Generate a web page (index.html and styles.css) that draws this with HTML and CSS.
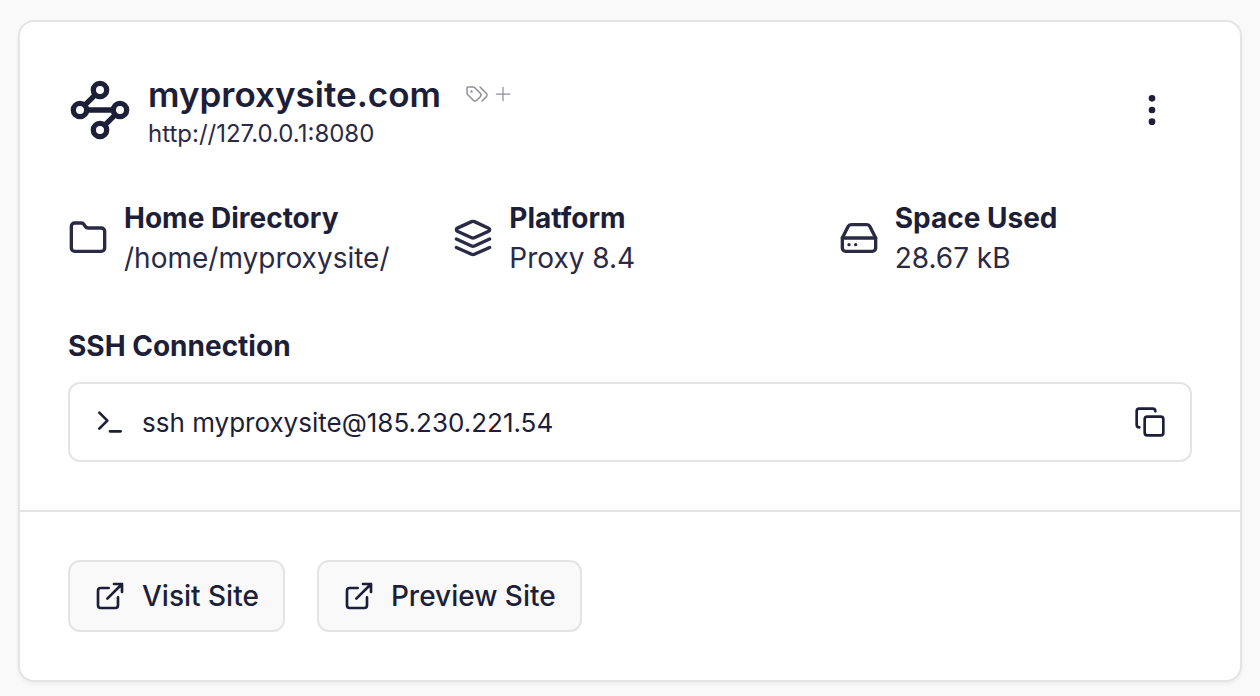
FILE: index.html
```html
<!DOCTYPE html>
<html lang="en">
<head>
  <meta charset="UTF-8">
  <meta name="viewport" content="width=device-width, initial-scale=1">
  <title>myproxysite.com</title>
  <link rel="stylesheet" href="styles.css">
</head>
<body>
  <main class="card">
    <div class="card-body">
      <!-- Site name and menu -->
      <header class="site-header">
        <svg class="icon icon-logo" viewBox="0 0 24 24" aria-hidden="true">
          <circle cx="12" cy="4.5" r="2.5"/>
          <path d="m10.2 6.3-3.9 3.9"/>
          <circle cx="4.5" cy="12" r="2.5"/>
          <path d="M7 12h10"/>
          <circle cx="19.5" cy="12" r="2.5"/>
          <path d="m13.8 17.7 3.9-3.9"/>
          <circle cx="12" cy="19.5" r="2.5"/>
        </svg>
        <div class="site-text">
          <div class="title-row">
            <h1>myproxysite.com</h1>
            <button class="tag-btn" type="button" aria-label="Add tag">
              <svg class="icon icon-tags" viewBox="0 0 24 24" aria-hidden="true">
                <path d="m15 5 6.3 6.3a2.4 2.4 0 0 1 0 3.4L17 19"/>
                <path d="M9.586 5.586A2 2 0 0 0 8.172 5H3a1 1 0 0 0-1 1v5.172a2 2 0 0 0 .586 1.414L8.29 18.29a2.426 2.426 0 0 0 3.42 0l3.58-3.58a2.426 2.426 0 0 0 0-3.42z"/>
                <circle cx="6.5" cy="9.5" r=".5" fill="currentColor"/>
              </svg>
              <svg class="icon icon-plus" viewBox="0 0 24 24" aria-hidden="true">
                <path d="M4 12h16M12 4v16"/>
              </svg>
            </button>
          </div>
          <p class="site-url">http://127.0.0.1:8080</p>
        </div>
        <button class="menu-btn" type="button" aria-label="Site menu">
          <svg class="icon icon-lg" viewBox="0 0 24 24" aria-hidden="true">
            <circle cx="12" cy="5" r="1"/>
            <circle cx="12" cy="12" r="1"/>
            <circle cx="12" cy="19" r="1"/>
          </svg>
        </button>
      </header>

      <!-- Site details -->
      <dl class="details">
        <div class="detail">
          <svg class="icon icon-lg" viewBox="0 0 24 24" aria-hidden="true">
            <path d="M20 20a2 2 0 0 0 2-2V8a2 2 0 0 0-2-2h-7.9a2 2 0 0 1-1.69-.9L9.6 3.9A2 2 0 0 0 7.93 3H4a2 2 0 0 0-2 2v13a2 2 0 0 0 2 2Z"/>
          </svg>
          <div>
            <dt>Home Directory</dt>
            <dd>/home/myproxysite/</dd>
          </div>
        </div>
        <div class="detail">
          <svg class="icon icon-lg" viewBox="0 0 24 24" aria-hidden="true">
            <path d="m12.83 2.18a2 2 0 0 0-1.66 0L2.6 6.08a1 1 0 0 0 0 1.83l8.58 3.91a2 2 0 0 0 1.66 0l8.58-3.9a1 1 0 0 0 0-1.83Z"/>
            <path d="m22 17.65-9.17 4.16a2 2 0 0 1-1.66 0L2 17.65"/>
            <path d="m22 12.65-9.17 4.16a2 2 0 0 1-1.66 0L2 12.65"/>
          </svg>
          <div>
            <dt>Platform</dt>
            <dd>Proxy 8.4</dd>
          </div>
        </div>
        <div class="detail">
          <svg class="icon icon-lg" viewBox="0 0 24 24" aria-hidden="true">
            <path d="M22 12H2"/>
            <path d="M5.45 5.11 2 12v6a2 2 0 0 0 2 2h16a2 2 0 0 0 2-2v-6l-3.45-6.89A2 2 0 0 0 16.76 4H7.24a2 2 0 0 0-1.79 1.11z"/>
            <path d="M6 16h.01M10 16h.01"/>
          </svg>
          <div>
            <dt>Space Used</dt>
            <dd>28.67 kB</dd>
          </div>
        </div>
      </dl>

      <!-- SSH -->
      <div class="ssh">
        <label for="ssh">SSH Connection</label>
        <div class="ssh-box">
          <svg class="icon icon-md" viewBox="0 0 24 24" aria-hidden="true">
            <path d="m4 17 6-6-6-6M12 19h8"/>
          </svg>
          <input id="ssh" type="text" value="ssh myproxysite@185.230.221.54" readonly>
          <button class="copy-btn" type="button" aria-label="Copy">
            <svg class="icon icon-md" viewBox="0 0 24 24" aria-hidden="true">
              <rect x="8" y="8" width="14" height="14" rx="2"/>
              <path d="M4 16c-1.1 0-2-.9-2-2V4c0-1.1.9-2 2-2h10c1.1 0 2 .9 2 2"/>
            </svg>
          </button>
        </div>
      </div>
    </div>

    <footer class="card-footer">
      <a class="btn" href="#visit">
        <svg class="icon icon-md" viewBox="0 0 24 24" aria-hidden="true">
          <path d="M15 3h6v6M10 14 21 3M18 13v6a2 2 0 0 1-2 2H5a2 2 0 0 1-2-2V8a2 2 0 0 1 2-2h6"/>
        </svg>
        Visit Site
      </a>
      <a class="btn" href="#preview">
        <svg class="icon icon-md" viewBox="0 0 24 24" aria-hidden="true">
          <path d="M15 3h6v6M10 14 21 3M18 13v6a2 2 0 0 1-2 2H5a2 2 0 0 1-2-2V8a2 2 0 0 1 2-2h6"/>
        </svg>
        Preview Site
      </a>
    </footer>
  </main>
</body>
</html>
```

FILE: styles.css
```css
* {
  box-sizing: border-box;
}
body {
  margin: 0;
  padding: 20px 18px 14px;
  background: #f9f9f9;
  color: #1d1e38;
  font-family: Inter, "Liberation Sans", sans-serif;
  font-size: 28px;
  line-height: 40px;
}
h1, p, dl, dd {
  margin: 0;
}
button {
  padding: 0;
  border: none;
  background: none;
  color: inherit;
  cursor: pointer;
}
.card {
  background: #ffffff;
  border: 2px solid #e4e4e4;
  border-radius: 16px;
  box-shadow: 0 2px 4px rgba(0, 0, 0, 0.05);
}
.card-body {
  display: flex;
  flex-direction: column;
  gap: 48px;
  padding: 48px;
}

/* Icons */
.icon {
  display: block;
  flex-shrink: 0;
  fill: none;
  stroke: currentColor;
  stroke-width: 2;
  stroke-linecap: round;
  stroke-linejoin: round;
}
.icon-logo {
  width: 64px;
  height: 64px;
}
.icon-lg {
  width: 40px;
  height: 40px;
}
.icon-md {
  width: 32px;
  height: 32px;
}
.icon-tags {
  width: 24px;
  height: 24px;
  stroke-width: 1.5;
}
.icon-plus {
  width: 20px;
  height: 20px;
  stroke-width: 1.5;
}

/* Header */
.site-header {
  display: flex;
  align-items: center;
  gap: 16px;
}
.site-text {
  flex: 1;
}
.title-row {
  display: flex;
  align-items: center;
  gap: 24px;
}
h1 {
  font-size: 35px;
  font-weight: 600;
  line-height: 48px;
}
.tag-btn {
  display: flex;
  align-items: center;
  gap: 4px;
  color: #8e8e9b;
}
.site-url {
  font-size: 24px;
  line-height: 32px;
  color: #2a2a44;
}
.menu-btn {
  padding: 20px;
}

/* Details */
.details {
  display: grid;
  grid-template-columns: repeat(3, 1fr);
  gap: 32px;
}
.detail {
  display: flex;
  align-items: center;
  gap: 16px;
  color: #2a2a44;
}
dt {
  font-weight: 700;
  color: #1d1e38;
}

/* SSH */
.ssh {
  display: flex;
  flex-direction: column;
  gap: 16px;
}
.ssh label {
  font-weight: 700;
}
.ssh-box {
  display: flex;
  align-items: center;
  gap: 16px;
  padding: 18px 24px;
  border: 2px solid #e4e4e4;
  border-radius: 12px;
}
.ssh-box input {
  flex: 1;
  min-width: 0;
  height: 40px;
  padding: 0;
  border: none;
  outline: none;
  background: none;
  color: inherit;
  font-family: inherit;
  font-size: 26px;
}

/* Footer */
.card-footer {
  display: flex;
  gap: 32px;
  padding: 48px;
  border-top: 2px solid #e4e4e4;
}
.btn {
  display: flex;
  align-items: center;
  gap: 16px;
  padding: 14px 24px;
  border: 2px solid #e4e4e4;
  border-radius: 12px;
  background: #f9f9f9;
  color: inherit;
  font-weight: 500;
  text-decoration: none;
}
```
